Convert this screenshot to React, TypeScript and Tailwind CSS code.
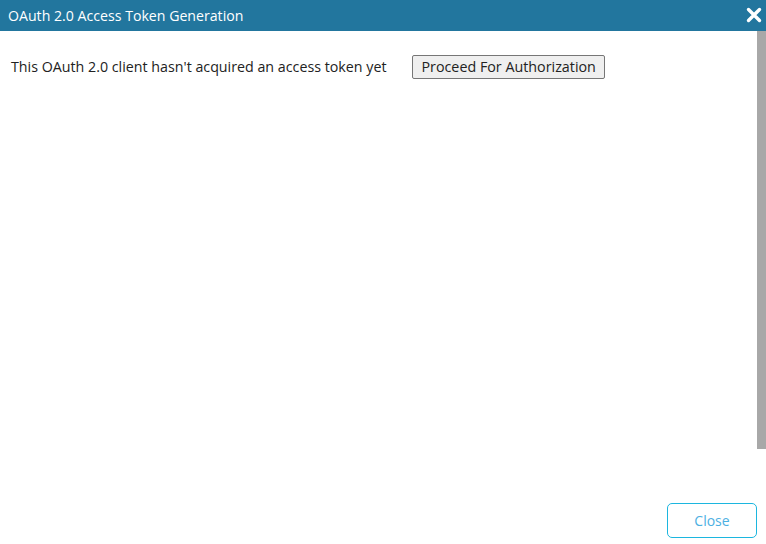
import React from 'react';

const App: React.FC = () => {
  return (
    <div
      className="w-[766px] h-[544px] bg-white flex flex-col overflow-hidden"
      style={{ fontFamily: '"Open Sans", sans-serif' }}
    >
      {/* header */}
      <div className="h-[31px] bg-[#22769e] flex items-center justify-between pl-[8px] pr-[4px]">
        <span className="text-white text-[14.15px]">OAuth 2.0 Access Token Generation</span>
        <svg width="16" height="16" viewBox="0 0 16 16" className="mt-[-2px]">
          <path d="M2.5 2.5 L13.5 13.5 M13.5 2.5 L2.5 13.5" stroke="white" strokeWidth="3.4" strokeLinecap="round" />
        </svg>
      </div>

      {/* body with scrollbar */}
      <div className="flex h-[418px]">
        <div className="flex-1 pl-[11px] pt-[24px]">
          <div className="flex items-center">
            <span className="text-[14.25px] text-[#222]">This OAuth 2.0 client hasn't acquired an access token yet</span>
            <button className="ml-[26px] h-[24px] px-[8px] bg-[#efefef] border border-[#767676] rounded-[2px] text-[14.3px] text-[#222] leading-none">
              Proceed For Authorization
            </button>
          </div>
        </div>
        <div className="w-[9px] bg-[#a8a8a8]" />
      </div>

      {/* footer */}
      <div className="flex-1 flex justify-end items-start pt-[54px] pr-[9px]">
        <button className="w-[90px] h-[35px] border border-[#1cb6df] rounded-[5px] text-[14px] text-[#4db0e2] bg-white">
          Close
        </button>
      </div>
    </div>
  );
};

export default App;
